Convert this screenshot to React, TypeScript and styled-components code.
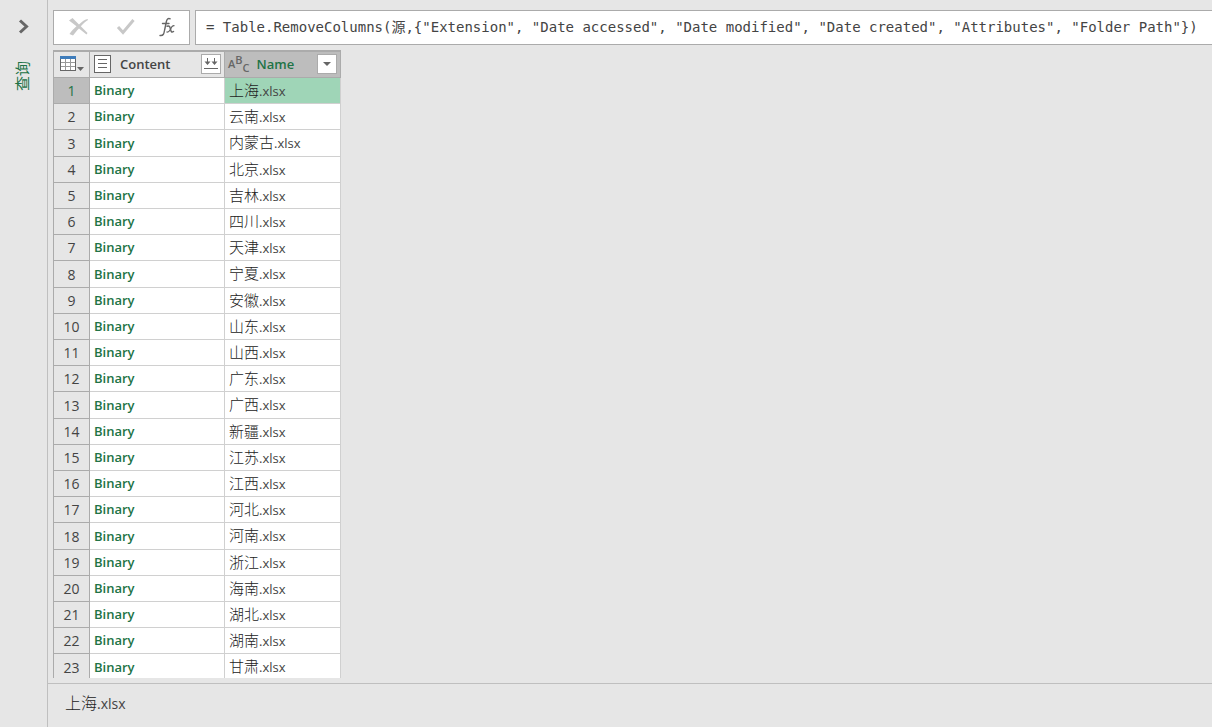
import React, { useState } from "react";
import styled, { createGlobalStyle } from "styled-components";

const color = {
  page: "#e6e6e6",
  line: "#ababab",
  rule: "#bfbfbf",
  cellLine: "#d0d0d0",
  selected: "#bdbdbd",
  selectedCell: "#9fd5b7",
  text: "#444444",
  region: "#222222",
  icon: "#666666",
  green: "#217346",
};

const cjk = `"Noto Sans CJK SC", sans-serif`;

const GlobalStyle = createGlobalStyle`
  * { box-sizing: border-box; }
  body {
    margin: 0;
    background: ${color.page};
    color: ${color.text};
    font-family: "Open Sans", ${cjk};
    font-size: 13px;
  }
  button { padding: 0; border: 0; background: none; font: inherit; color: inherit; }
  svg { display: block; }
`;

const Page = styled.div`
  display: flex;
  height: 100vh;
  overflow: hidden;
`;

const Sidebar = styled.aside`
  flex: 0 0 48px;
  display: flex;
  flex-direction: column;
  align-items: center;
  gap: 26px;
  padding-top: 18px;
  border-right: 1px solid ${color.rule};
`;

const QueriesTab = styled.button`
  padding-left: 4px;
  color: ${color.green};
  font-family: ${cjk};
  font-size: 15px;
  line-height: 20px;
  writing-mode: vertical-rl;
  text-orientation: sideways;
  transform: rotate(180deg);
`;

const Main = styled.main`
  flex: 1;
  min-width: 0;
  display: flex;
  flex-direction: column;
`;

const FormulaBar = styled.div`
  display: flex;
  gap: 5px;
  height: 35px;
  flex: none;
  margin: 10px 0 5px 5px;
`;

const FormulaActions = styled.div`
  flex: 0 0 137px;
  display: flex;
  align-items: center;
  justify-content: space-between;
  padding: 0 12px 2px 14px;
  background: #fff;
  border: 1px solid ${color.line};
`;

const FormulaInput = styled.input`
  flex: 1;
  min-width: 0;
  padding: 0 10px 4px;
  background: #fff;
  border: 1px solid ${color.line};
  border-right: 0;
  border-radius: 0;
  outline: 0;
  color: ${color.text};
  font-family: "DejaVu Sans Mono", "Noto Sans CJK SC", monospace;
  font-size: 14px;
`;

const TableArea = styled.div`
  flex: 1;
  min-height: 0;
  overflow: hidden;
  margin: 0 5px;
`;

const Table = styled.table`
  width: 288px;
  table-layout: fixed;
  border-collapse: separate;
  border-spacing: 0;
  border-top: 2px solid ${color.line};
  border-left: 1px solid ${color.line};
`;

const HeadCell = styled.th<{ $selected?: boolean }>`
  height: 26px;
  padding: 0 0 2px;
  border-right: 1px solid ${color.line};
  border-bottom: 1px solid ${color.line};
  background: ${(p) => (p.$selected ? color.selected : color.page)};
  color: ${(p) => (p.$selected ? color.green : color.text)};
  font-weight: 600;
  text-align: left;
`;

const HeadContent = styled.div<{ $gap: number }>`
  display: flex;
  align-items: center;
  gap: ${(p) => p.$gap}px;
  padding: 0 3px 0 4px;
  line-height: 20px;
`;

const HeadLabel = styled.span`
  flex: 1;
`;

const HeadButton = styled.button`
  display: grid;
  place-items: center;
  width: 20px;
  height: 20px;
  background: #fff;
  border: 1px solid ${color.line};
`;

const CornerButton = styled.button`
  display: block;
  padding-left: 6px;
`;

const Row = styled.tr`
  height: 26px;
  &:nth-child(5n + 3) { height: 27px; }
`;

const RowNumber = styled.th<{ $selected: boolean }>`
  padding: 1px 0 0;
  border-right: 1px solid ${color.line};
  border-bottom: 1px solid ${color.line};
  background: ${(p) => (p.$selected ? color.selected : color.page)};
  color: ${(p) => (p.$selected ? color.green : color.text)};
  font-size: 14px;
  font-weight: 400;
  line-height: 20px;
  text-align: center;
`;

const Cell = styled.td<{ $selected?: boolean }>`
  padding: 0 4px 1px;
  border-right: 1px solid ${color.cellLine};
  border-bottom: 1px solid ${color.cellLine};
  background: ${(p) => (p.$selected ? color.selectedCell : "#fff")};
  font-weight: 500;
  line-height: 20px;
  white-space: nowrap;
`;

const BinaryLink = styled.a`
  color: ${color.green};
  font-weight: 600;
  text-decoration: none;
`;

const Region = styled.span<{ $size: number }>`
  color: ${color.region};
  font-family: ${cjk};
  font-size: ${(p) => p.$size}px;
  font-weight: 300;
`;

const Preview = styled.footer`
  flex: 0 0 44px;
  margin-top: 5px;
  padding: 8px 17px;
  border-top: 1px solid ${color.rule};
  font-size: 14px;
  font-weight: 500;
  line-height: 20px;
`;

const regions = [
  "上海", "云南", "内蒙古", "北京", "吉林", "四川", "天津", "宁夏", "安徽", "山东", "山西", "广东",
  "广西", "新疆", "江苏", "江西", "河北", "河南", "浙江", "海南", "湖北", "湖南", "甘肃",
];

const ChevronIcon = () => (
  <svg width="12" height="17" viewBox="0 0 12 17" fill="none" stroke={color.icon} strokeWidth="3">
    <path d="M2 2.5 8.5 8.5 2 14.5" />
  </svg>
);

const CancelIcon = () => (
  <svg width="22" height="20" viewBox="0 0 22 20" fill="#c8c8c8">
    <path d="M1 3.5 4.5 1 11 7.5C13.500 5 16.500 2.800 19.500 2L20 3C17.500 4.500 15 6.800 12.800 9.300L19.500 16 18.500 17.500 11 11.500C8.500 14 6.500 16.500 5 18.500L1.500 17C3.500 14 6 11.500 8.500 9.300Z" />
  </svg>
);

const ConfirmIcon = () => (
  <svg width="20" height="18" viewBox="0 0 20 18" fill="none" stroke="#c8c8c8" strokeWidth="3">
    <path d="M3 9 8 14.500 18.500 2" />
  </svg>
);

const FunctionIcon = () => (
  <svg width="18" height="22" viewBox="0 0 18 22" fill="none" stroke={color.icon} strokeLinecap="round">
    <path strokeWidth="1.400" d="M1 19.500C4.500 20 5 17.500 5.600 14L7.300 6C7.800 3.200 9 2 11.200 2.800M3.500 7.500H10" />
    <path strokeWidth="1.500" d="M8 10.200C10.500 9.200 11 11 11.500 13.200 12 15.800 12.800 16.800 14.500 15.500" />
    <path strokeWidth="1.200" d="M15 9.700C13 9.500 12 12 11.300 13.500 10.500 15 9.500 16.500 7.800 16" />
  </svg>
);

const TableIcon = () => (
  <svg width="26" height="17" viewBox="0 0 26 17">
    <g shapeRendering="crispEdges">
      <path fill="#fff" d="M0 1h16v15H0z" />
      <path fill="#999" d="M5 4h1v11H5zM10 4h1v11h-1zM1 7h14v1H1zM1 11h14v1H1z" />
      <path fill={color.icon} d="M0 4h1v12H0zM15 4h1v12h-1zM0 15h16v1H0z" />
      <path fill="#3f7dbb" d="M0 1h16v3H0z" />
    </g>
    <path fill={color.icon} d="M17 12h7l-3.500 4z" />
  </svg>
);

const RecordIcon = () => (
  <svg width="17" height="18" viewBox="0 0 17 18" shapeRendering="crispEdges">
    <path fill="#fff" stroke={color.icon} d="M.5.5h16v17H.5z" />
    <path fill={color.icon} d="M4 4h9v1H4zM4 8h9v1H4zM4 12h9v1H4z" />
  </svg>
);

const CombineIcon = () => (
  <svg width="14" height="13" viewBox="0 0 14 13" fill={color.icon}>
    <path d="M3 1h1v5h-1zM10 1h1v5h-1zM.5 4.500h6l-3 3.500zM7.500 4.500h6l-3 3.500zM0 11h14v1H0z" />
  </svg>
);

const ArrowIcon = () => (
  <svg width="8" height="4" viewBox="0 0 8 4" fill={color.icon}>
    <path d="M0 0h8L4 4z" />
  </svg>
);

const TypeMark = styled.span`
  display: flex;
  flex: 0 0 20px;
  height: 20px;
  margin-left: -1px;
  color: ${color.icon};
  font-size: 11px;
  font-weight: 600;
`;

const TypeLetter = styled.span<{ $align: string }>`
  align-self: ${(p) => p.$align};
  line-height: 12px;
`;

export default function App() {
  const [formula, setFormula] = useState(
    '= Table.RemoveColumns(源,{"Extension", "Date accessed", "Date modified", "Date created", "Attributes", "Folder Path"})'
  );

  return (
    <Page>
      <GlobalStyle />
      <Sidebar>
        <button aria-label="展开"><ChevronIcon /></button>
        <QueriesTab>查询</QueriesTab>
      </Sidebar>
      <Main>
        <FormulaBar>
          <FormulaActions>
            <button aria-label="取消"><CancelIcon /></button>
            <button aria-label="确认"><ConfirmIcon /></button>
            <button aria-label="函数"><FunctionIcon /></button>
          </FormulaActions>
          <FormulaInput
            aria-label="公式"
            spellCheck={false}
            value={formula}
            onChange={(e) => setFormula(e.target.value)}
          />
        </FormulaBar>
        <TableArea>
          <Table>
            <colgroup>
              <col style={{ width: 36 }} />
              <col style={{ width: 135 }} />
              <col style={{ width: 116 }} />
            </colgroup>
            <thead>
              <tr>
                <HeadCell>
                  <CornerButton aria-label="表选项"><TableIcon /></CornerButton>
                </HeadCell>
                <HeadCell>
                  <HeadContent $gap={9}>
                    <RecordIcon />
                    <HeadLabel>Content</HeadLabel>
                    <HeadButton aria-label="合并文件"><CombineIcon /></HeadButton>
                  </HeadContent>
                </HeadCell>
                <HeadCell $selected>
                  <HeadContent $gap={7}>
                    <TypeMark aria-hidden="true">
                      <TypeLetter $align="center">A</TypeLetter>
                      <TypeLetter $align="flex-start">B</TypeLetter>
                      <TypeLetter $align="flex-end">C</TypeLetter>
                    </TypeMark>
                    <HeadLabel>Name</HeadLabel>
                    <HeadButton aria-label="筛选"><ArrowIcon /></HeadButton>
                  </HeadContent>
                </HeadCell>
              </tr>
            </thead>
            <tbody>
              {regions.map((region, i) => (
                <Row key={region}>
                  <RowNumber scope="row" $selected={i === 0}>{i + 1}</RowNumber>
                  <Cell><BinaryLink href="#">Binary</BinaryLink></Cell>
                  <Cell $selected={i === 0}><Region $size={15}>{region}</Region>.xlsx</Cell>
                </Row>
              ))}
            </tbody>
          </Table>
        </TableArea>
        <Preview><Region $size={16}>{regions[0]}</Region>.xlsx</Preview>
      </Main>
    </Page>
  );
}
